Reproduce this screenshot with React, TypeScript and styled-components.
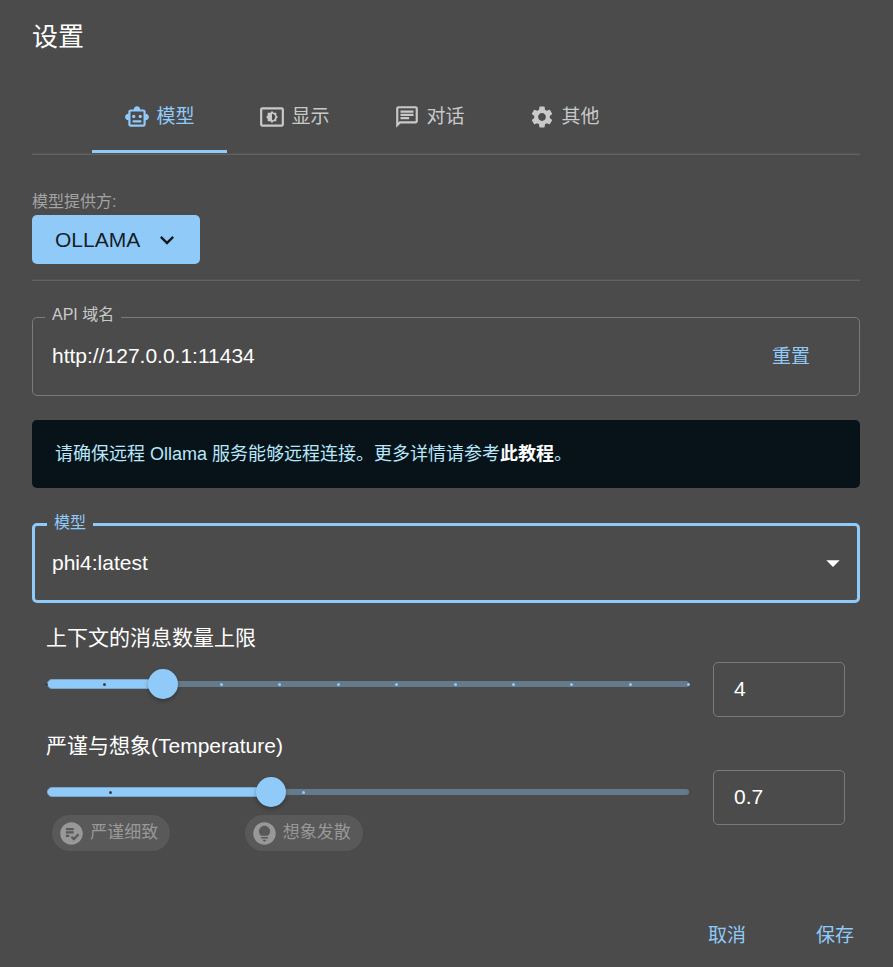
import React, { useState } from "react";
import styled, { createGlobalStyle, css } from "styled-components";
import {
  MdArrowDropDown,
  MdKeyboardArrowDown,
  MdLightbulbCircle,
  MdOutlineChat,
  MdOutlineSettingsBrightness,
  MdOutlineSmartToy,
  MdPlaylistAddCheckCircle,
  MdSettings,
} from "react-icons/md";

const color = {
  paper: "#4b4b4b",
  primary: "#90caf9",
  text: "#ffffff",
  muted: "#c9c9c9",
  faint: "#a3a3a3",
  outline: "#7b7b7b",
  rail: "#657b8d",
};

const GlobalStyle = createGlobalStyle`
  *, *::before, *::after { box-sizing: border-box; }
  body {
    margin: 0;
    background: ${color.paper};
    color: ${color.text};
    font-family: "Liberation Sans", "Noto Sans CJK SC", sans-serif;
  }
  button, input, select { font-family: inherit; }
`;

const Dialog = styled.form`
  display: flex;
  flex-direction: column;
  min-height: 100vh;
  padding-top: 20px;
`;

const Content = styled.main`
  flex: 1;
  padding: 0 33px 0 32px;
`;

const Title = styled.h1`
  margin: 0 0 27px;
  font-size: 26px;
  line-height: 34px;
  font-weight: 400;
`;

const TabList = styled.div`
  display: flex;
  padding: 0 60px 1px;
  border-bottom: 1px solid #626262;
  box-shadow: inset 0 -1px #535353;
`;

const Tab = styled.button<{ $active: boolean }>`
  display: flex;
  align-items: center;
  justify-content: center;
  gap: 6px;
  width: 135px;
  height: 72px;
  padding: 3px 0 0;
  border: 0;
  border-bottom: 3px solid ${(p) => (p.$active ? color.primary : "transparent")};
  background: none;
  color: ${(p) => (p.$active ? color.primary : color.muted)};
  font-size: 19px;
  line-height: 26px;
  cursor: pointer;

  svg {
    width: 26px;
    height: 26px;
  }
`;

const Provider = styled.section`
  margin-bottom: 36px;
  padding: 36px 0 16px;
  border-bottom: 1px solid #626262;
  box-shadow: inset 0 -1px #535353;
`;

const Caption = styled.label`
  display: block;
  margin-bottom: 2px;
  color: ${color.faint};
  font-size: 16px;
  line-height: 22px;
`;

const ProviderButton = styled.button`
  display: flex;
  align-items: center;
  gap: 13px;
  height: 49px;
  padding: 0 19px 0 23px;
  border: 0;
  border-radius: 5px;
  background: ${color.primary};
  color: rgba(0, 0, 0, 0.87);
  font-size: 21px;
  cursor: pointer;

  svg {
    width: 28px;
    height: 28px;
  }
`;

const Field = styled.div<{ $focused?: boolean }>`
  position: relative;
  display: flex;
  align-items: center;
  border-radius: 5px;
  ${(p) =>
    p.$focused
      ? css`
          height: 80px;
          border: 3px solid ${color.primary};
        `
      : css`
          height: 79px;
          border: 1px solid ${color.outline};
        `}
`;

const FieldLabel = styled.label<{ $focused?: boolean }>`
  position: absolute;
  top: -14px;
  left: 12px;
  padding: 0 7px;
  background: ${color.paper};
  color: ${(p) => (p.$focused ? color.primary : color.muted)};
  font-size: 16px;
  line-height: 22px;
`;

const TextInput = styled.input`
  flex: 1;
  min-width: 0;
  height: 40px;
  padding: 0 0 2px 19px;
  border: 0;
  outline: 0;
  background: none;
  color: ${color.text};
  font-size: 21px;
`;

const TextButton = styled.button`
  min-width: 84px;
  height: 48px;
  padding: 0 10px;
  border: 0;
  border-radius: 5px;
  background: none;
  color: ${color.primary};
  font-size: 19px;
  line-height: 28px;
  cursor: pointer;
`;

const FieldAction = styled.div`
  padding-right: 26px;
`;

const Notice = styled.p`
  margin: 24px 0 35px;
  padding: 20px 23px;
  border-radius: 5px;
  background: #071318;
  color: #b8e7fb;
  font-size: 18px;
  line-height: 28px;
`;

const NoticeLink = styled.a`
  color: ${color.text};
  font-weight: 700;
  text-decoration: none;
`;

const SelectBox = styled.div`
  display: grid;
  flex: 1;
  align-items: center;

  > * {
    grid-area: 1 / 1;
  }

  svg {
    justify-self: end;
    width: 32px;
    height: 32px;
    margin-right: 8px;
    pointer-events: none;
  }
`;

const Select = styled.select`
  width: 100%;
  height: 72px;
  padding: 0 48px 2px 17px;
  border: 0;
  outline: 0;
  appearance: none;
  background: none;
  color: ${color.text};
  font-size: 21px;
`;

const Settings = styled.div`
  display: flex;
  flex-direction: column;
  gap: 15px;
  padding: 21px 15px 60px 14px;
`;

const SettingName = styled.label`
  display: block;
  margin-bottom: 10px;
  font-size: 21px;
  line-height: 28px;
`;

const SettingRow = styled.div`
  display: flex;
  align-items: flex-start;
  gap: 24px;
`;

const SliderBox = styled.div`
  position: relative;
  flex: 1;
  height: 44px;
  margin-left: 1px;
`;

const Rail = styled.div`
  position: absolute;
  top: 19px;
  left: 0;
  width: 100%;
  height: 6px;
  border-radius: 3px;
  background: ${color.rail};
`;

const Fill = styled.div`
  position: absolute;
  top: 17px;
  left: 0;
  height: 10px;
  border: 1px solid #7ca6c9;
  border-radius: 5px;
  background: ${color.primary};
`;

const Mark = styled.span<{ $passed: boolean }>`
  position: absolute;
  top: 21px;
  width: 3px;
  height: 3px;
  margin-left: -2px;
  border-radius: 50%;
  background: ${(p) => (p.$passed ? "#33424e" : color.primary)};
`;

const Range = styled.input`
  position: absolute;
  top: 7px;
  left: -16px;
  width: calc(100% + 30px);
  height: 30px;
  margin: 0;
  appearance: none;
  background: none;
  cursor: pointer;

  &::-webkit-slider-thumb {
    appearance: none;
    width: 30px;
    height: 30px;
    border-radius: 50%;
    background: ${color.primary};
    box-shadow: 0 2px 4px rgba(0, 0, 0, 0.3);
  }
`;

const ChipAnchor = styled.div`
  position: absolute;
  top: 45px;
  display: flex;
  justify-content: center;
  width: 0;
`;

const Chip = styled.span`
  display: flex;
  flex: none;
  align-items: center;
  gap: 5px;
  height: 36px;
  padding: 0 12px 0 6px;
  border-radius: 18px;
  background: #595959;
  color: #989898;
  font-size: 17px;
  line-height: 24px;
  white-space: nowrap;

  svg {
    width: 27px;
    height: 27px;
  }
`;

const NumberInput = styled.input`
  width: 132px;
  height: 55px;
  padding: 0 20px 2px;
  border: 1px solid ${color.outline};
  border-radius: 5px;
  background: none;
  color: ${color.text};
  font-size: 21px;
`;

const Footer = styled.footer`
  display: flex;
  justify-content: flex-end;
  gap: 24px;
  padding: 0 16px 7px;
`;

const tabs = [
  { name: "模型", Icon: MdOutlineSmartToy },
  { name: "显示", Icon: MdOutlineSettingsBrightness },
  { name: "对话", Icon: MdOutlineChat },
  { name: "其他", Icon: MdSettings },
];

type MarkSpec = { value: number; label?: string; icon?: React.ReactNode };

const contextMarks: MarkSpec[] = Array.from({ length: 12 }, (_, i) => ({ value: i * 2 }));

const temperatureMarks: MarkSpec[] = [
  { value: 0.2, label: "严谨细致", icon: <MdPlaylistAddCheckCircle /> },
  { value: 0.8, label: "想象发散", icon: <MdLightbulbCircle /> },
];

type SliderSettingProps = {
  id: string;
  name: string;
  initial: number;
  max: number;
  step: number;
  marks: MarkSpec[];
};

function SliderSetting({ id, name, initial, max, step, marks }: SliderSettingProps) {
  const [value, setValue] = useState(initial);
  const percent = (n: number) => `${(n / max) * 100}%`;

  return (
    <div>
      <SettingName htmlFor={id}>{name}</SettingName>
      <SettingRow>
        <SliderBox>
          <Rail />
          <Fill style={{ width: percent(value) }} />
          {marks.map((mark) => (
            <Mark key={mark.value} $passed={mark.value <= value} style={{ left: percent(mark.value) }} />
          ))}
          <Range
            id={id}
            type="range"
            min={0}
            max={max}
            step={step}
            value={value}
            onChange={(e) => setValue(Number(e.target.value))}
          />
          {marks
            .filter((mark) => mark.label)
            .map((mark) => (
              <ChipAnchor key={mark.value} style={{ left: percent(mark.value) }}>
                <Chip>
                  {mark.icon}
                  {mark.label}
                </Chip>
              </ChipAnchor>
            ))}
        </SliderBox>
        <NumberInput
          type="text"
          inputMode="decimal"
          aria-label={name}
          value={value}
          onChange={(e) => setValue(Number(e.target.value) || 0)}
        />
      </SettingRow>
    </div>
  );
}

const DEFAULT_HOST = "http://127.0.0.1:11434";

export default function App() {
  const [active, setActive] = useState("模型");
  const [host, setHost] = useState(DEFAULT_HOST);

  return (
    <>
      <GlobalStyle />
      <Dialog onSubmit={(e) => e.preventDefault()}>
        <Content>
          <Title>设置</Title>
          <TabList role="tablist">
            {tabs.map(({ name, Icon }) => (
              <Tab
                key={name}
                type="button"
                role="tab"
                aria-selected={active === name}
                $active={active === name}
                onClick={() => setActive(name)}
              >
                <Icon />
                {name}
              </Tab>
            ))}
          </TabList>

          <Provider>
            <Caption htmlFor="provider">模型提供方:</Caption>
            <ProviderButton id="provider" type="button" aria-haspopup="menu">
              OLLAMA
              <MdKeyboardArrowDown />
            </ProviderButton>
          </Provider>

          <Field>
            <FieldLabel htmlFor="host">API 域名</FieldLabel>
            <TextInput id="host" type="text" value={host} onChange={(e) => setHost(e.target.value)} />
            <FieldAction>
              <TextButton type="button" onClick={() => setHost(DEFAULT_HOST)}>
                重置
              </TextButton>
            </FieldAction>
          </Field>

          <Notice>
            请确保远程 Ollama 服务能够远程连接。更多详情请参考<NoticeLink href="#guide">此教程</NoticeLink>。
          </Notice>

          <Field $focused>
            <FieldLabel $focused htmlFor="model">
              模型
            </FieldLabel>
            <SelectBox>
              <Select id="model" defaultValue="phi4:latest">
                <option>phi4:latest</option>
              </Select>
              <MdArrowDropDown />
            </SelectBox>
          </Field>

          <Settings>
            <SliderSetting
              id="context"
              name="上下文的消息数量上限"
              initial={4}
              max={22}
              step={2}
              marks={contextMarks}
            />
            <SliderSetting
              id="temperature"
              name="严谨与想象(Temperature)"
              initial={0.7}
              max={2}
              step={0.1}
              marks={temperatureMarks}
            />
          </Settings>
        </Content>

        <Footer>
          <TextButton type="button">取消</TextButton>
          <TextButton type="submit">保存</TextButton>
        </Footer>
      </Dialog>
    </>
  );
}
